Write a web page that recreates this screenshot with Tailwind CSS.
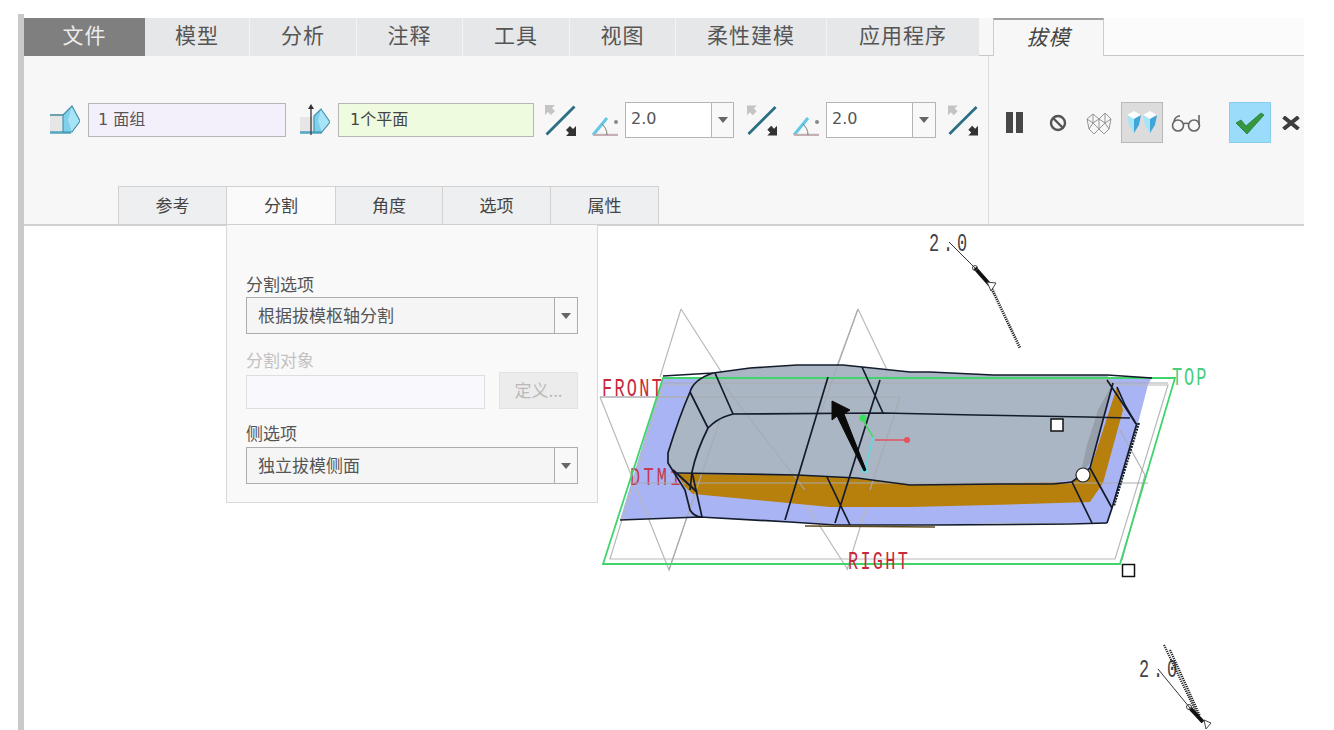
<!DOCTYPE html>
<html lang="zh">
<head>
  <meta charset="UTF-8" />
  <title>拔模</title>
  <script src="https://cdn.jsdelivr.net/npm/@tailwindcss/browser@4"></script>
</head>
<body class="bg-white">
  <!-- shared toolbar icons -->
  <svg class="hidden">
    <symbol id="flip" viewBox="0 0 31 31">
      <path d="M0 0h10L7 3l3 3-4 4-3-3-3 3z" fill="#c4c4c4"/>
      <path d="M1.5 29.5 29.5 1.5" stroke="#2c6f82" stroke-width="2.8" fill="none"/>
      <path d="M31 31H21l3-3-3-3 4-4 3 3 3-3z" fill="#333"/>
    </symbol>
    <symbol id="angle" viewBox="0 0 28 20">
      <path d="M1 19 15 2" stroke="#63c7e6" stroke-width="3" fill="none"/>
      <path d="M1 19h25" stroke="#c4b0b4" stroke-width="2.4" fill="none"/>
      <path d="M10 8c3 3 5 6 5 11" stroke="#777" stroke-width="1" fill="none"/>
      <circle cx="24" cy="6" r="2" fill="#888"/>
    </symbol>
    <symbol id="arrow" viewBox="0 0 12 8">
      <path d="M1 1h10L6 7z" fill="#666"/>
    </symbol>
  </svg>

  <div class="w-[1334px] h-[730px] overflow-hidden pt-[14px] pl-[18px] flex" style="font-family:'Noto Sans CJK SC','Liberation Sans',sans-serif">
    <div class="w-[6px] h-[716px] bg-[#c9c9c9]"></div>
    <div class="w-[1310px] flex flex-col pt-[4px]">

      <!-- main tabs -->
      <div class="w-[1280px] h-[38px] flex text-[21px] leading-[33px] tracking-[1px] text-[#555] text-center">
        <div class="w-[121px] bg-[#7f7f7f] text-[#ececec]">文件</div>
        <div class="w-[105px] bg-[#e6e7e8] border-r border-[#f4f4f4]">模型</div>
        <div class="w-[107px] bg-[#e6e7e8] border-r border-[#f4f4f4]">分析</div>
        <div class="w-[106px] bg-[#e6e7e8] border-r border-[#f4f4f4]">注释</div>
        <div class="w-[107px] bg-[#e6e7e8] border-r border-[#f4f4f4]">工具</div>
        <div class="w-[106px] bg-[#e6e7e8] border-r border-[#f4f4f4]">视图</div>
        <div class="w-[151px] bg-[#e6e7e8] border-r border-[#f4f4f4]">柔性建模</div>
        <div class="w-[152px] bg-[#e6e7e8]">应用程序</div>
        <div class="w-[14px] bg-[#f7f7f8] border-b border-[#c8c8c8]"></div>
        <div class="w-[111px] bg-[#f7f7f8] border-x border-t-2 border-x-[#cccccc] border-t-[#a0a0a0] italic text-[#444]">拔模</div>
        <div class="flex-1 bg-[#fbfbfb] border-b border-[#c8c8c8]"></div>
      </div>

      <!-- ribbon -->
      <div class="w-[1280px] h-[170px] flex bg-[#f7f7f8] border-b-2 border-[#d0d0d0]">
        <div class="w-[965px] flex flex-col border-r border-[#dcdcdc]">
          <div class="h-[130px] flex items-center pb-[2px] text-[17px] text-[#555]">
            <svg class="ml-[26px] w-[30px] h-[32px]" viewBox="0 0 30 32">
              <path d="M0 12h14v16H0z" fill="#e6e6e6"/>
              <path d="M0 11h13" stroke="#4d8a9c" stroke-width="1.6"/>
              <path d="M0 28.500h21" stroke="#58a8c2" stroke-width="2.6"/>
              <path d="M13 11 22 2l8 15-8 11h-9z" fill="#a8e4f7"/>
              <path d="M13 11 22 2 18 16 22 28h-9z" fill="#7fd0ea"/>
              <path d="M13 11 22 2l8 15-8 11h-9z" fill="none" stroke="#3f8ea8" stroke-width="1.1"/>
            </svg>
            <div class="ml-[8px] w-[198px] h-[34px] bg-[#f3f0fb] border border-[#b5b5b5] pl-[9px] leading-[31px]" style="font-family:'DejaVu Sans','Noto Sans CJK SC',sans-serif;font-size:16px">1 面组</div>
            <svg class="ml-[14px] w-[30px] h-[34px]" viewBox="0 0 30 34">
              <path d="M0 14h14v15H0z" fill="#e6e6e6"/>
              <path d="M0 29.500h22" stroke="#58a8c2" stroke-width="2.6"/>
              <path d="M14 13 21 6l9 13-8 10h-8z" fill="#a8e4f7"/>
              <path d="M14 13 21 6 18 18 22 29h-8z" fill="#7fd0ea"/>
              <path d="M14 13 21 6l9 13-8 10h-8z" fill="none" stroke="#3f8ea8" stroke-width="1.1"/>
              <path d="M11 4v28" stroke="#444" stroke-width="1.4"/>
              <path d="M8 6l3-5 3 5z" fill="#333"/>
            </svg>
            <div class="ml-[8px] w-[196px] h-[34px] bg-[#eefbdf] border border-[#b5b5b5] pl-[11px] leading-[31px] text-[#444]" style="font-family:'DejaVu Sans','Noto Sans CJK SC',sans-serif;font-size:16px">1个平面</div>

            <svg class="ml-[11px] w-[31px] h-[31px]"><use href="#flip"/></svg>
            <svg class="ml-[16px] mt-[12px] w-[28px] h-[20px]"><use href="#angle"/></svg>
            <div class="ml-[5px] w-[109px] h-[36px] bg-white border border-[#b5b5b5] flex" style="font-family:'DejaVu Sans',sans-serif;font-size:16px">
              <div class="flex-1 pl-[5px] leading-[32px]">2.0</div>
              <div class="w-[22px] border-l border-[#b5b5b5] bg-[#f8f8f8] flex items-center justify-center"><svg class="w-[12px] h-[8px]"><use href="#arrow"/></svg></div>
            </div>
            <svg class="ml-[13px] w-[30px] h-[31px]"><use href="#flip"/></svg>
            <svg class="ml-[16px] mt-[12px] w-[28px] h-[20px]"><use href="#angle"/></svg>
            <div class="ml-[5px] w-[110px] h-[36px] bg-white border border-[#b5b5b5] flex" style="font-family:'DejaVu Sans',sans-serif;font-size:16px">
              <div class="flex-1 pl-[5px] leading-[32px]">2.0</div>
              <div class="w-[23px] border-l border-[#b5b5b5] bg-[#f8f8f8] flex items-center justify-center"><svg class="w-[12px] h-[8px]"><use href="#arrow"/></svg></div>
            </div>
            <svg class="ml-[12px] w-[30px] h-[31px]"><use href="#flip"/></svg>
          </div>

          <!-- sub tabs -->
          <div class="h-[38px] flex pl-[94px] text-[17px] leading-[36px] text-center text-[#444]">
            <div class="w-[109px] bg-[#eeeff0] border-x border-t border-[#d2d2d2]">参考</div>
            <div class="w-[108px] bg-[#fafafa] border-t border-[#d2d2d2]">分割</div>
            <div class="w-[108px] bg-[#eeeff0] border-x border-t border-[#d2d2d2]">角度</div>
            <div class="w-[108px] bg-[#eeeff0] border-r border-t border-[#d2d2d2]">选项</div>
            <div class="w-[108px] bg-[#eeeff0] border-r border-t border-[#d2d2d2]">属性</div>
          </div>
        </div>

        <!-- action buttons -->
        <div class="flex-1 flex items-start pt-[46px]">
          <div class="h-[41px] flex items-center">
            <svg class="ml-[17px] w-[17px] h-[21px]" viewBox="0 0 17 21"><path d="M0 0h7v21H0zM10 0h7v21h-7z" fill="#474747"/></svg>
            <svg class="ml-[26px] w-[18px] h-[18px]" viewBox="0 0 18 18"><circle cx="9" cy="9" r="7" fill="none" stroke="#555" stroke-width="2.4"/><path d="M4 4l10 10" stroke="#555" stroke-width="2.4"/></svg>
            <svg class="ml-[18px] w-[28px] h-[24px]" viewBox="0 0 28 24" fill="none" stroke="#949494" stroke-width="1"><path d="M2 8 8 3 14 8 20 2 26 8 24 18 20 12 14 18 8 12 4 18ZM8 3V12M20 2V12M14 8V18M4 18l5 5 5-5 5 5 5-5M2 8l6 4M14 8l-6 4M14 8l6 4M26 8l-6 4"/></svg>
            <div class="ml-[8px] w-[42px] h-[41px] bg-[#dcdcdc] border border-[#b9b9b9] flex items-center justify-center">
              <svg class="w-[30px] h-[23px]" viewBox="0 0 30 23">
                <path d="M0 4 7 0l7 4-7 4zM16 4l7-4 7 4-7 4z" fill="#fff"/>
                <path d="M0 4l7 4v14L2 14zM16 4l7 4v14l-5-8z" fill="#a8e4f7"/>
                <path d="M14 4 7 8v14l5-8zM30 4l-7 4v14l5-8z" fill="#3fa6dc"/>
              </svg>
            </div>
            <svg class="ml-[8px] w-[30px] h-[18px]" viewBox="0 0 30 18" fill="none" stroke="#666" stroke-width="1.6"><circle cx="7" cy="11.500" r="5.500"/><circle cx="23" cy="11.500" r="5.500"/><path d="M12 10c1-1 5-1 6 0M3 7c1-3 3-5 6-5M28 11V1"/></svg>
            <div class="ml-[28px] w-[42px] h-[41px] bg-[#9bdcfb] border border-[#86cdee] flex items-center justify-center">
              <svg class="w-[30px] h-[24px]" viewBox="0 0 30 24"><path d="M1 12l5-3 5 6L26 2l3 2-17 19z" fill="#35983f" stroke="#2b7a3a" stroke-width=".8"/></svg>
            </div>
            <svg class="ml-[11px] w-[18px] h-[14px]" viewBox="0 0 18 14"><path d="M1.500 1 16.500 13M16.500 1 1.500 13" stroke="#3d3d3d" stroke-width="4"/></svg>
          </div>
        </div>
      </div>

      <!-- model canvas -->
      <div class="relative h-[504px]">
        <svg class="block" width="1310" height="504" viewBox="24 226 1310 504" fill="none" style="font-family:'Liberation Mono',monospace">
          <!-- surface under the body -->
          <path d="M663 377H1152L1148 385 1137 427 1112 508 1107 523H1000L935 525 835 525 790 522 700 517 620 520Z" fill="#a9b4f4"/>
          <!-- datum planes behind -->
          <g stroke="#b9b9b9" stroke-width="1.2">
            <path d="M681 309 660 377M681 309 848 570M600 397 669 570 720 420M858 309 900 397 847 570M858 309 806 450"/>
            <path d="M600 397H900M610 559H1115L1168 385H663Z"/>
          </g>
          <text transform="translate(630 485) scale(.65 1)" font-size="26" letter-spacing="5" fill="#c23a52">DTM1</text>
          <!-- part body -->
          <path d="M713 373 750 368 797 365 843 365 910 372 930 372 993 375 1107 375 1113 383 1090 463 1073 480 1030 484 910 485 857 478 797 475 677 473 668 463 670 443 690 390 700 378Z" fill="#abb6c4"/>
          <path d="M1113 383 1090 463 1080 476 1087 445 1098 410Z" fill="#97a0aa"/>
          <path d="M677 474 797 475 857 478 910 485 1070 482 1090 470 1117 387 1123 410 1103 483 1090 502 1057 503 990 505 910 507 830 507 693 494 685 487Z" fill="#b77f0c"/>
          <!-- transparent datum lines through body -->
          <g stroke="#a8aab0" stroke-width="1.1">
            <path d="M663 383H1168M600 397H900M630 483H1148M1120 430 1145 475 1122 560"/>
            <path d="M720 380 805 490M858 309 820 415M900 397 870 490M669 570 720 420"/>
          </g>
          <!-- green plane -->
          <path d="M663 378H1175L1120 564H603Z" stroke="#3fd56c" stroke-width="1.8"/>
          <!-- edges -->
          <g stroke="#141c2c" stroke-width="1.7" stroke-linejoin="round">
            <path d="M663 376 713 373 750 368 797 365 843 365 910 372 930 372 993 375 1107 375 1152 378"/>
            <path d="M733 414 883 413 975 415 1087 417 1130 418"/>
            <path d="M715 373 733 414C718 418 712 424 708 428 698 448 694 462 692 472L690 490"/>
            <path d="M713 373C698 378 692 385 690 392 680 415 672 440 668 453V463L685 490 690 510C693 515 697 517 702 517"/>
            <path d="M690 392 708 428M692 472 702 517"/>
            <path d="M828 377 785 520M862 367 883 413M880 380 835 523M827 477 850 525"/>
            <path d="M1107 380 1135 422M1113 383 1090 468 1072 482 1092 523M1090 468 1112 508M1137 423 1112 508 1107 523"/>
            <path d="M620 520 700 517 790 522 835 525 935 525 1070 524 1107 523"/>
            <path d="M677 473 797 475 857 478 910 485 1000 484 1053 484 1072 482"/>
            <path d="M1117 387 1125 405 1136 424"/>
          </g>
          <path d="M1139 423 1114 506" stroke="#141c2c" stroke-width="2" stroke-dasharray="2 1"/>
          <path d="M805 526 935 527" stroke="#5f4a1f" stroke-width="1.4"/>
          <path d="M673 470 697 492" stroke="#141c2c" stroke-width="2"/>
          <!-- datum labels -->
          <g font-size="26">
            <text transform="translate(602 396) scale(.65 1)" letter-spacing="3.500" fill="#c8283c">FRONT</text>
            <text transform="translate(848 569) scale(.65 1)" letter-spacing="3.500" fill="#c8283c">RIGHT</text>
            <text transform="translate(1172 385) scale(.65 1)" letter-spacing="3" fill="#45cf7e">TOP</text>
          </g>
          <!-- pull direction triad -->
          <path d="M863 420 873 437" stroke="#48d868" stroke-width="1.5"/>
          <path d="M873 437 865 470" stroke="#5fd8e0" stroke-width="1.5"/>
          <path d="M875 440H907" stroke="#e65060" stroke-width="1.5"/>
          <circle cx="907" cy="440" r="3" fill="#e65060"/>
          <circle cx="863" cy="418" r="3.500" fill="#3be05a"/>
          <circle cx="865" cy="470" r="3" fill="#5fe0e8"/>
          <path d="M832 401 850 410 844 414 866 470 864 471 837 416 832 420Z" fill="#0a0a0a" stroke="#0a0a0a"/>
          <!-- drag handles -->
          <rect x="1051" y="419" width="12" height="12" fill="#fff" stroke="#111" stroke-width="1.5"/>
          <rect x="1122.500" y="564.500" width="12" height="12" fill="#fff" stroke="#111" stroke-width="1.5"/>
          <circle cx="1083" cy="475" r="7" fill="#fff" stroke="#222" stroke-width="1.2"/>
          <!-- dimensions -->
          <g font-size="26" fill="#444">
            <text transform="translate(929 251) scale(.65 1)" letter-spacing="6">2.0</text>
            <text transform="translate(1139 677) scale(.65 1)" letter-spacing="6">2.0</text>
          </g>
          <path d="M949 242 975 268" stroke="#333"/>
          <path d="M975 268 990 285" stroke="#111" stroke-width="4"/>
          <path d="M990 285 1020 348" stroke="#222" stroke-width="2.800" stroke-dasharray="1.200 1"/>
          <circle cx="975" cy="268" r="2.500" stroke="#444"/>
          <path d="M987 282 996 283 991 291Z" fill="#fff" stroke="#444"/>
          <path d="M1164 645 1198 716M1170 650 1200 716" stroke="#222" stroke-width="2.200" stroke-dasharray="1.200 1"/>
          <path d="M1158 669 1190 708" stroke="#333"/>
          <path d="M1190 708 1203 722" stroke="#111" stroke-width="4"/>
          <circle cx="1189" cy="707" r="2.500" stroke="#444"/>
          <path d="M1204 720 1211 723 1206 729Z" fill="#fff" stroke="#444"/>
        </svg>

        <!-- dropdown panel of the split tab -->
        <div class="absolute left-[202px] top-[-1px] w-[372px] h-[278px] bg-[#f9f9f9] border border-t-0 border-[#d8d8d8] px-[19px] pt-[48px] text-[17px] text-[#555]">
          <div class="h-[24px] leading-[22px]">分割选项</div>
          <div class="h-[37px] flex bg-[#f5f5f5] border border-[#adadad]">
            <div class="flex-1 pl-[11px] leading-[33px]">根据拔模枢轴分割</div>
            <div class="w-[23px] border-l border-[#adadad] bg-[#f8f8f8] flex items-center justify-center"><svg class="w-[12px] h-[8px]"><use href="#arrow"/></svg></div>
          </div>
          <div class="mt-[15px] h-[22px] leading-[22px] text-[#c2c2c2]">分割对象</div>
          <div class="mt-[1px] h-[37px] flex items-end justify-between">
            <div class="w-[239px] h-[34px] bg-[#f9f8fc] border border-[#dedede]"></div>
            <div class="w-[79px] h-[37px] bg-[#ececec] border border-[#e2e2e2] text-center leading-[33px] text-[#b9b9b9]">定义...</div>
          </div>
          <div class="mt-[13px] h-[22px] leading-[22px]">侧选项</div>
          <div class="mt-[3px] h-[37px] flex bg-[#f5f5f5] border border-[#adadad]">
            <div class="flex-1 pl-[11px] leading-[33px]">独立拔模侧面</div>
            <div class="w-[23px] border-l border-[#adadad] bg-[#f8f8f8] flex items-center justify-center"><svg class="w-[12px] h-[8px]"><use href="#arrow"/></svg></div>
          </div>
        </div>
      </div>
    </div>
  </div>
</body>
</html>
